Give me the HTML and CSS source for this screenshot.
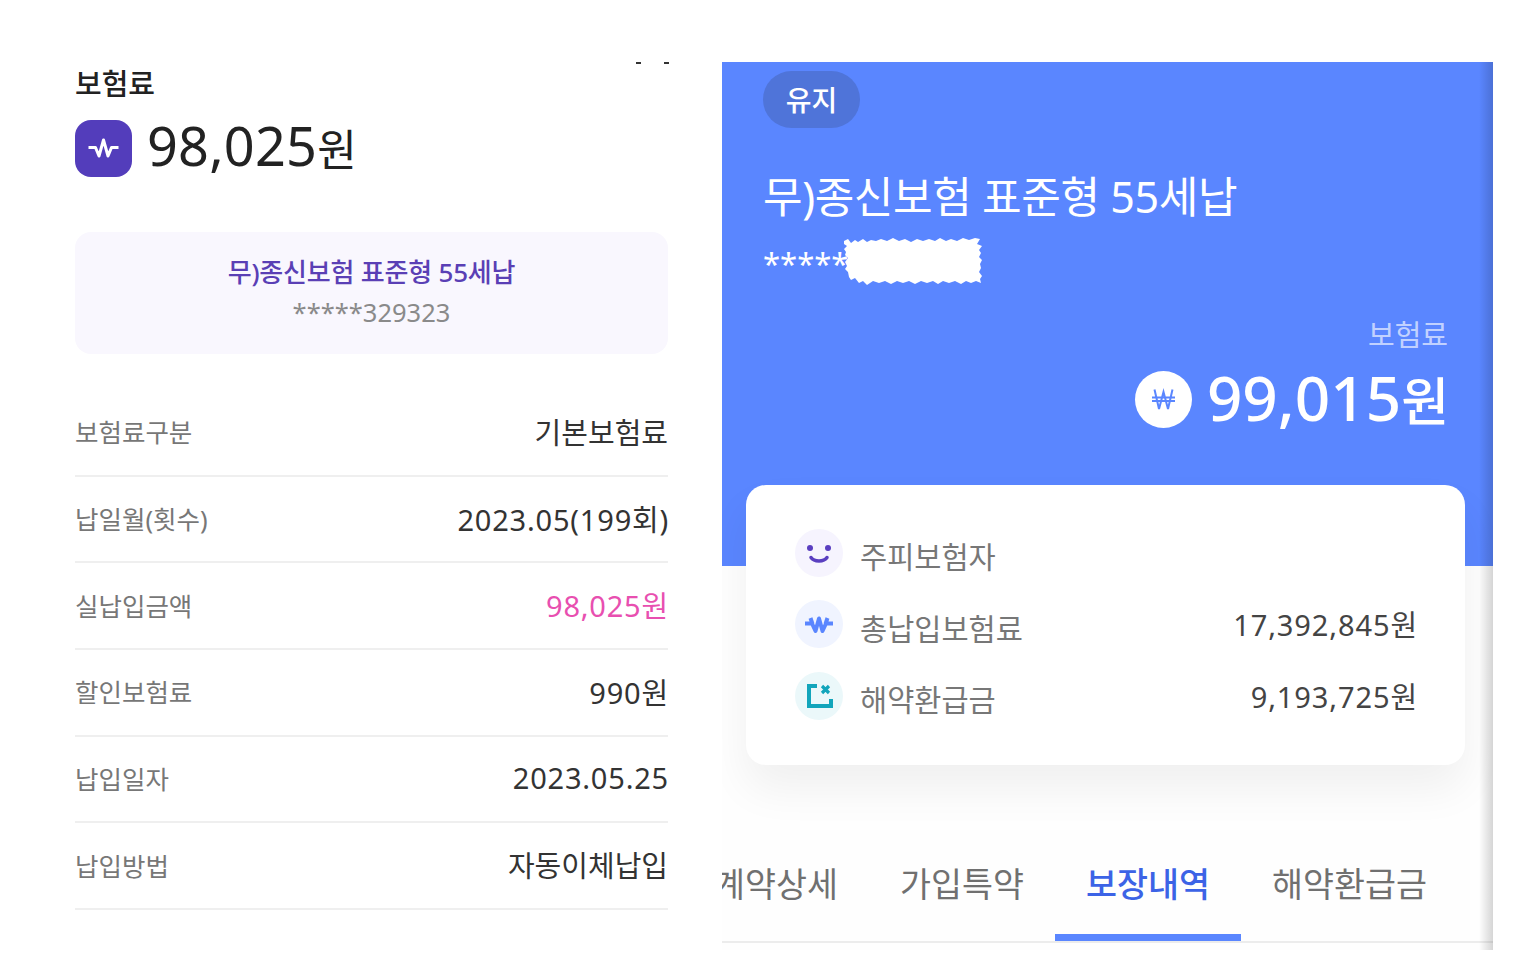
FILE: index.html
```html
<!DOCTYPE html>
<html lang="ko">
<head>
<meta charset="utf-8">
<title>보험료</title>
<link rel="stylesheet" href="styles.css">
</head>
<body>
<main class="page">
  <section class="left">
    <i class="speck speck-a"></i><i class="speck speck-b"></i>
    <h2 class="left-title">보험료</h2>
    <div class="left-amount">
      <span class="square-icon">
        <svg width="57" height="57" viewBox="0 0 57 57"><path d="M13.500 27.500H20.500L24 36L28.500 20L33 36L36.500 27.500H43.500" fill="none" stroke="#fff" stroke-width="3" stroke-linejoin="round"/></svg>
      </span>
      <span class="left-number">98,025<span class="unit-left">원</span></span>
    </div>
    <div class="product-box">
      <div class="product-name">무)종신보험 표준형 55세납</div>
      <div class="product-no">*****329323</div>
    </div>
    <dl class="rows">
      <div class="row"><dt>보험료구분</dt><dd>기본보험료</dd></div>
      <div class="row"><dt>납일월(횟수)</dt><dd class="num">2023.05(199회)</dd></div>
      <div class="row"><dt>실납입금액</dt><dd class="num pink">98,025원</dd></div>
      <div class="row"><dt>할인보험료</dt><dd class="num">990원</dd></div>
      <div class="row"><dt>납입일자</dt><dd class="num">2023.05.25</dd></div>
      <div class="row"><dt>납입방법</dt><dd>자동이체납입</dd></div>
    </dl>
  </section>

  <section class="right">
    <div class="hero">
      <span class="pill">유지</span>
      <h1 class="hero-title">무)종신보험 표준형 55세납</h1>
      <div class="hero-no">
        <span class="hero-stars">*****</span>
        <svg class="scribble" width="140" height="48" viewBox="0 0 140 48"><polygon fill="#fff" points="1,3 5,1 8,5 12,2 15,4 20,1 24,4 28,2 33,3 38,1 44,3 50,0 56,3 62,1 68,4 74,1 80,3 86,1 92,3 97,0 103,3 108,1 114,3 120,0 126,2 132,0 137,1 134,6 139,8 136,12 138,15 136,19 139,22 137,26 138,30 136,34 139,38 137,41 138,45 133,43 128,45 123,43 118,46 112,43 106,45 100,43 95,46 90,43 84,45 78,43 72,46 66,43 60,45 54,43 48,46 42,43 36,45 30,43 24,47 20,43 16,45 12,40 8,42 6,39 5,34 2,31 4,28 2,24 5,20 2,17 3,14 1,11 4,8 1,6"/></svg>
      </div>
      <div class="premium-label">보험료</div>
      <div class="premium">
        <span class="won-icon">
          <svg width="57" height="57" viewBox="0 0 57 57"><path d="M19.500 18.500L24 38L28.500 21L33 38L37.500 18.500M17 26.500H40M17 30H40" fill="none" stroke="#5a86ff" stroke-width="2"/></svg>
        </span>
        <span class="premium-number">99,015<span class="unit-hero">원</span></span>
      </div>
    </div>

    <div class="card">
      <div class="card-row">
        <span class="round round-purple">
          <svg width="48" height="48" viewBox="0 0 48 48"><circle cx="15" cy="19" r="3" fill="#5a3fc0"/><circle cx="33" cy="19" r="3" fill="#5a3fc0"/><path d="M16 28.500C19 33 29 33 32 28.500" fill="none" stroke="#5a3fc0" stroke-width="3.500" stroke-linecap="round"/></svg>
        </span>
        <span class="card-label">주피보험자</span>
      </div>
      <div class="card-row">
        <span class="round round-blue">
          <svg width="48" height="48" viewBox="0 0 48 48"><path d="M10 23.500H17L20.500 31L24 18.500L27.500 31L31 23.500H38M30.500 24L32.500 18M17.500 24L15.500 18" fill="none" stroke="#5a86ff" stroke-width="4" stroke-linejoin="round"/></svg>
        </span>
        <span class="card-label">총납입보험료</span>
        <span class="card-value">17,392,845원</span>
      </div>
      <div class="card-row">
        <span class="round round-teal">
          <svg width="48" height="48" viewBox="0 0 48 48"><path d="M22 14H14V34H36V27" fill="none" stroke="#12a5bb" stroke-width="4"/><path d="M27 14L34 21M34 14L27 21" fill="none" stroke="#12a5bb" stroke-width="3.200"/></svg>
        </span>
        <span class="card-label">해약환급금</span>
        <span class="card-value">9,193,725원</span>
      </div>
    </div>

    <nav class="tabs">
      <span class="tab tab-first">계약상세</span>
      <span class="tab">가입특약</span>
      <span class="tab tab-active">보장내역</span>
      <span class="tab">해약환급금</span>
    </nav>
    <div class="edge"></div>
  </section>
</main>
</body>
</html>
```

FILE: styles.css
```css
* { box-sizing: border-box; }
html, body { margin: 0; padding: 0; background: #fff; }
body { font-family: "Noto Sans", "Noto Sans CJK KR", sans-serif; color: #222; }

.page { display: flex; width: 1530px; height: 972px; padding: 62px 0 0 75px; overflow: hidden; }

/* left */
.left { position: relative; width: 593px; height: 888px; flex: none; }
.speck { position: absolute; top: 0; width: 5px; height: 2px; background: #333; }
.speck-a { left: 561px; }
.speck-b { left: 589px; }
.left-title { margin: 2px 0 0; font-size: 29px; line-height: 40px; font-weight: 500; color: #222; }
.left-amount { display: flex; align-items: center; gap: 15px; margin-top: 16px; height: 57px; }
.square-icon { display: block; width: 57px; height: 57px; border-radius: 16px; background: #533dbb; }
.square-icon svg, .won-icon svg, .round svg { display: block; }
.left-number { padding-bottom: 2px; font-size: 54px; line-height: 57px; font-weight: 400; letter-spacing: 0.2px; color: #222; }
.unit-left { font-size: 43px; }

.product-box { margin-top: 55px; height: 122px; border-radius: 16px; background: #f9f7fe; text-align: center; padding-top: 20px; }
.product-name { font-size: 26px; line-height: 40px; font-weight: 500; color: #5a3fb5; letter-spacing: -0.2px; }
.product-no { font-size: 25.500px; line-height: 40px; color: #8a8a8a; }

.rows { margin: 36px 0 0; }
.row { display: flex; justify-content: space-between; align-items: center; height: 86.700px; padding-bottom: 3px; border-bottom: 2px solid #efefef; }
.row dt { font-size: 25.500px; color: #777; }
.row dd { margin: 0; font-size: 29px; color: #333; }
.row dd.num { letter-spacing: 0.8px; margin-right: -1px; }
.row dd.pink { color: #e84fb0; }

/* right */
.right { position: relative; width: 771px; height: 888px; margin-left: 54px; flex: none; background: #fefefe; overflow: hidden; }
.hero { height: 504px; background: #5a86ff; padding: 9px 45px 0 41px; color: #fff; }
.pill { display: flex; align-items: center; justify-content: center; width: 97px; height: 57px; border-radius: 29px; background: #4f74d9; font-size: 28px; font-weight: 500; padding-bottom: 2px; color: #fff; }
.hero-title { margin: 39px 0 0; font-size: 43px; line-height: 60px; font-weight: 400; color: #fff; letter-spacing: -0.4px; white-space: nowrap; }
.hero-no { display: flex; align-items: flex-start; height: 48px; margin-top: 11px; line-height: 48px; color: #fff; }
.hero-stars { width: 80px; font-size: 31px; line-height: 50px; }
.premium-label { margin-top: 29px; text-align: right; font-size: 29px; line-height: 40px; color: rgba(255,255,255,.65); }
.premium { display: flex; justify-content: flex-end; align-items: center; gap: 15px; margin-top: 14px; height: 60px; margin-right: -1px; }
.won-icon { display: block; width: 57px; height: 57px; border-radius: 50%; background: #fff; }
.premium-number { font-size: 62px; line-height: 60px; font-weight: 500; color: #fff; }
.unit-hero { font-size: 52px; }

.card { position: relative; display: flex; flex-direction: column; gap: 22.500px; height: 280px; margin: -81px 28px 0 24px; padding: 43px 49px 0; border-radius: 20px; background: #fff; box-shadow: 0 24px 44px rgba(0,0,0,.06); }
.card-row { display: flex; align-items: center; height: 49px; }
.round { display: block; flex: none; width: 48px; height: 48px; border-radius: 50%; }
.round-purple { background: #f6f4fe; }
.round-blue { background: #f0f4ff; }
.round-teal { background: #ebf8fa; }
.card-label { margin-left: 17px; padding-top: 6px; font-size: 29.500px; color: #777; }
.card-value { margin: 0 -2px 0 auto; padding-bottom: 2px; font-size: 29px; letter-spacing: 0.9px; color: #444; }

.tabs { position: relative; display: flex; margin: 64px 0 0 -39px; height: 114px; }
.tabs::after { content: ""; position: absolute; left: 0; right: 0; bottom: 0; height: 2px; background: #ececec; }
.tab { display: flex; align-items: center; height: 112px; padding: 2px 31px 0; font-size: 33.700px; color: #707070; white-space: nowrap; border-bottom: 7px solid transparent; }
.tab-active { position: relative; z-index: 1; color: #3c63e6; font-weight: 500; border-bottom-color: #5a86ff; }

.edge { position: absolute; top: 0; right: 0; bottom: 0; width: 14px; background: linear-gradient(to right, rgba(0,0,0,0), rgba(0,0,0,.16)); }
```
